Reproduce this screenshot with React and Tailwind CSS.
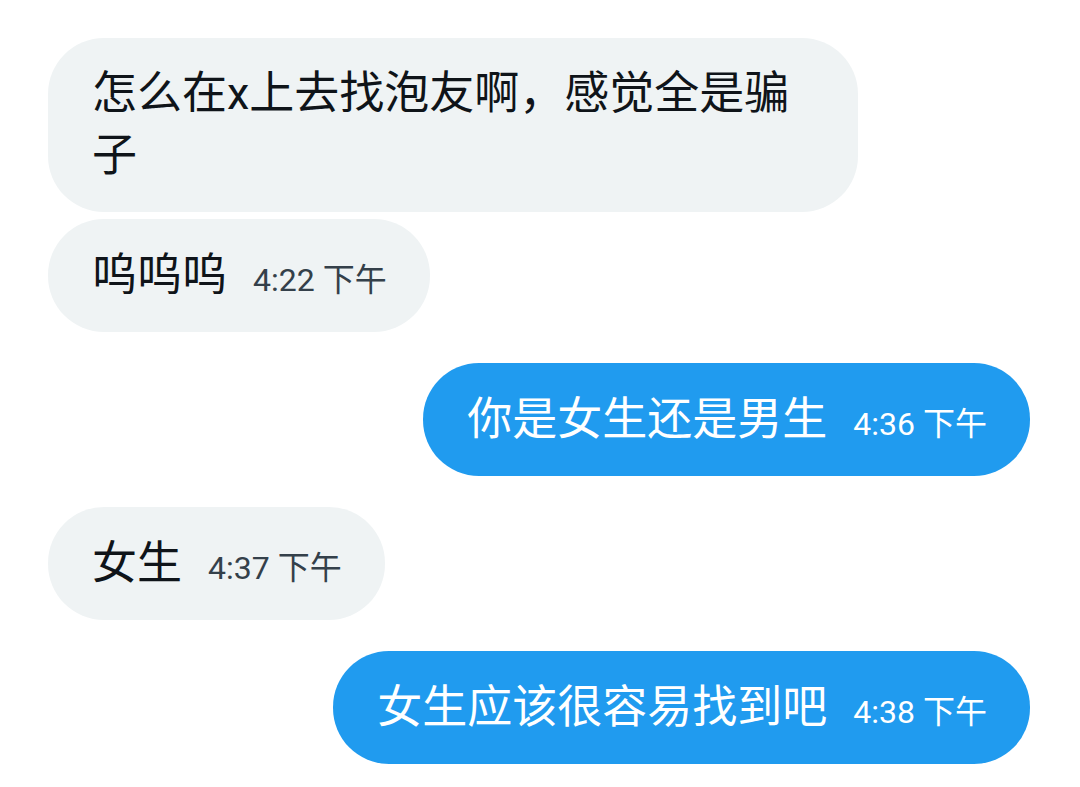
import React from 'react';

const messages = [
  { id: 1, side: 'left', text: '怎么在x上去找泡友啊，感觉全是骗子' },
  { id: 2, side: 'left', text: '呜呜呜', time: '4:22 下午', gap: 'mt-[7px]' },
  { id: 3, side: 'right', text: '你是女生还是男生', time: '4:36 下午', gap: 'mt-[31px]' },
  { id: 4, side: 'left', text: '女生', time: '4:37 下午', gap: 'mt-[31px]' },
  { id: 5, side: 'right', text: '女生应该很容易找到吧', time: '4:38 下午', gap: 'mt-[31px]' },
];

const Bubble = ({ side, text, time, gap = '' }) => {
  const mine = side === 'right';
  return (
    <div className={`flex ${mine ? 'justify-end' : 'justify-start'} ${gap}`}>
      <div
        className={`max-w-[810px] rounded-[56px] pl-[44px] pr-[43px] py-[25px] ${
          mine ? 'bg-[#209bef] text-white' : 'bg-[#eff3f4] text-[#0f1419]'
        }`}
      >
        {time ? (
          <div className="flex items-baseline h-[63px]">
            <span className="text-[45px] leading-[63px]">{text}</span>
            <span
              className={`ml-[26px] text-[32px] leading-[36px] ${
                mine ? 'text-white' : 'text-[#34404a]'
              }`}
            >
              {time}
            </span>
          </div>
        ) : (
          <p className="text-[45px] leading-[62px]">{text}</p>
        )}
      </div>
    </div>
  );
};

export default function App() {
  return (
    <div
      className="w-[1080px] h-[787px] bg-white pt-[38px] pl-[48px] pr-[50px] overflow-hidden"
      style={{ fontFamily: "Roboto, 'Noto Sans CJK SC', sans-serif" }}
    >
      {messages.map((m) => (
        <Bubble key={m.id} {...m} />
      ))}
    </div>
  );
}
